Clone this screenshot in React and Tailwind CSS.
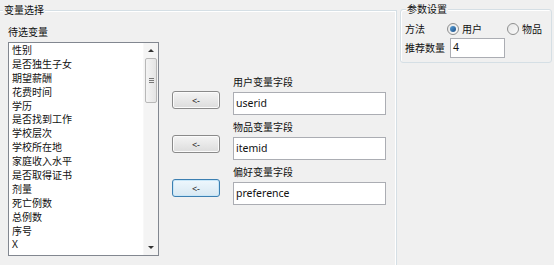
const items = ["性别","是否独生子女","期望薪酬","花费时间","学历","是否找到工作","学校层次","学校所在地","家庭收入水平","是否取得证书","剂量","死亡例数","总例数","序号","X"];

function ArrowBtn({ focused }) {
  return (
    <button
      className={
        "w-[48px] h-[18px] rounded-[3px] border flex items-center justify-center text-[9px] leading-none text-[#222] bg-gradient-to-b " +
        (focused
          ? "border-[#3c7fb1] from-[#eef7fd] to-[#d8e8f2] shadow-[inset_0_0_0_1px_#c7e6f8]"
          : "border-[#8a8a8a] from-[#f4f4f4] to-[#dcdcdc] shadow-[inset_0_0_0_1px_#fbfbfb]")
      }
    >
      &lt;-
    </button>
  );
}

function Field({ label, value, first }) {
  return (
    <div className={first ? "mt-[63px]" : "mt-[4px]"}>
      <div className="h-[16px] leading-[16px]">{label}</div>
      <div className="mt-[2px] w-[153px] h-[23px] border border-[#abadb3] bg-white pl-[2px] flex items-center text-[10.5px]">
        {value}
      </div>
    </div>
  );
}

function Radio({ checked }) {
  return (
    <div className="w-[12px] h-[12px] rounded-full border border-[#8e8f8f] bg-gradient-to-br from-[#e6e6e6] to-[#fafafa] flex items-center justify-center">
      {checked && <div className="w-[6px] h-[6px] rounded-full bg-gradient-to-br from-[#5aa1d8] to-[#1c4f88]" />}
    </div>
  );
}

export default function App() {
  return (
    <div className="w-[554px] h-[265px] bg-[#f0f0f0] overflow-hidden flex text-[10px] text-[#111] font-['Noto_Sans','Noto_Sans_CJK_SC',sans-serif]">
      {/* Left group */}
      <div className="relative w-[397px] h-full">
        <div className="mt-[10px] h-[300px] border-t border-r border-[#d5dfe5] shadow-[inset_-1px_1px_0_#ffffff] flex">
          <div className="ml-[8px] mt-[14px]">
            <div className="h-[15px] leading-[15px]">待选变量</div>
            <div className="mt-[2px] w-[151px] h-[214px] border border-[#828790] bg-white flex">
              <div className="w-[134px] pt-[1px] pl-[3px]">
                {items.map((t) => (
                  <div key={t} className="h-[13.9px] leading-[13.9px] whitespace-nowrap">{t}</div>
                ))}
              </div>
              <div className="w-[15px] h-full bg-[#f4f4f4] flex flex-col border-l border-[#f8f8f8]">
                <div className="h-[15px] flex items-center justify-center">
                  <div className="w-0 h-0 border-l-[3px] border-r-[3px] border-b-[3px] border-l-transparent border-r-transparent border-b-[#333]" />
                </div>
                <div className="mx-[1px] h-[45px] rounded-[2px] border border-[#b8b8b8] bg-gradient-to-r from-[#f4f4f4] to-[#e4e4e4] flex flex-col items-center justify-center gap-[1px]">
                  <div className="w-[5px] h-[1px] bg-[#777]" />
                  <div className="w-[5px] h-[1px] bg-[#777]" />
                  <div className="w-[5px] h-[1px] bg-[#777]" />
                </div>
                <div className="flex-1" />
                <div className="h-[15px] flex items-center justify-center">
                  <div className="w-0 h-0 border-l-[3px] border-r-[3px] border-t-[3px] border-l-transparent border-r-transparent border-t-[#333]" />
                </div>
              </div>
            </div>
          </div>
          <div className="ml-[13px] mt-[80px] flex flex-col gap-[26px]">
            <ArrowBtn />
            <ArrowBtn />
            <ArrowBtn focused />
          </div>
          <div className="ml-[13px]">
            <Field first label="用户变量字段" value="userid" />
            <Field label="物品变量字段" value="itemid" />
            <Field label="偏好变量字段" value="preference" />
          </div>
        </div>
        <div className="absolute left-[3px] top-[3px] px-[1px] bg-[#f0f0f0] leading-[14px]">变量选择</div>
      </div>

      {/* Right group */}
      <div className="relative ml-[3px] w-[152px]">
        <div className="mt-[9px] h-[54px] rounded-[3px] border border-[#d5dfe5] shadow-[inset_1px_1px_0_#ffffff]">
          <div className="mt-[10px] h-[18px] flex items-center pl-[4px]">
            <div className="w-[42px]">方法</div>
            <Radio checked />
            <div className="ml-[3px] w-[45px]">用户</div>
            <Radio />
            <div className="ml-[3px]">物品</div>
          </div>
          <div className="h-[20px] flex items-center pl-[4px]">
            <div className="w-[45px]">推荐数量</div>
            <div className="w-[55px] h-[20px] border border-[#abadb3] bg-white pl-[2px] flex items-center text-[10.5px]">4</div>
          </div>
        </div>
        <div className="absolute left-[6px] top-[2px] px-[1px] bg-[#f0f0f0] leading-[14px]">参数设置</div>
      </div>
    </div>
  );
}
